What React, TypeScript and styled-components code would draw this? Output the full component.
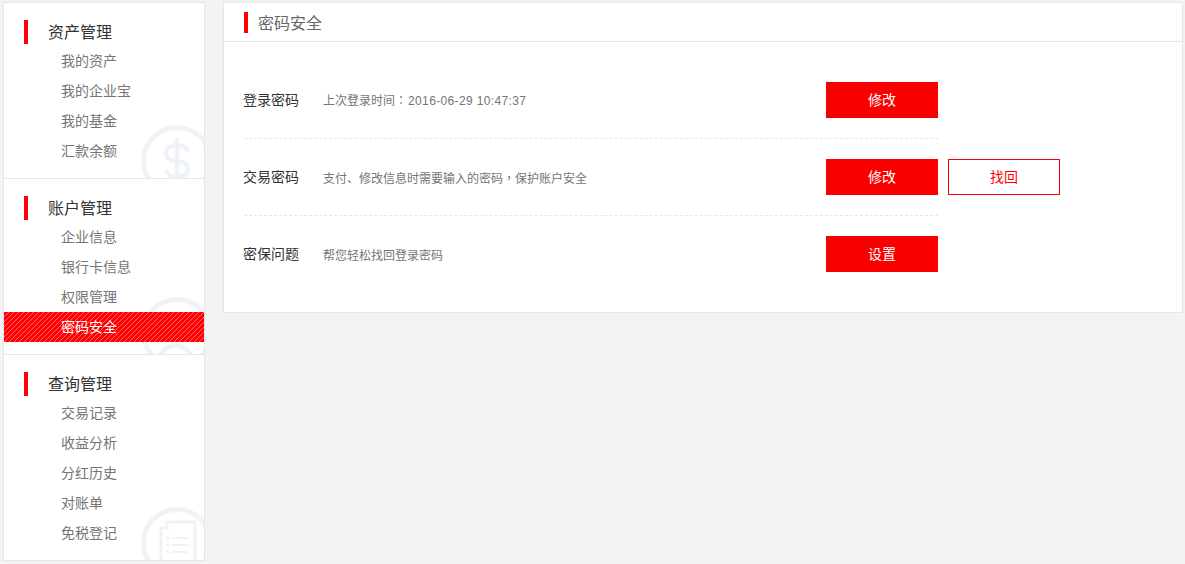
import React from "react";
import styled, { createGlobalStyle } from "styled-components";

const Global = createGlobalStyle`
  html, body { margin: 0; padding: 0; background: #f3f3f3; height: 100%; overflow: hidden; }
  body { font-family: "Liberation Sans", "Noto Sans CJK SC", sans-serif; }
  * { box-sizing: border-box; }
`;

const Page = styled.div`
  display: flex;
  align-items: flex-start;
  gap: 18px;
  width: 1185px;
  padding: 2px 2px 0 3px;
`;

const Sidebar = styled.nav`
  width: 202px;
  height: 559px;
  background: #fff;
  border: 1px solid #e6e6e6;
  overflow: hidden;
`;

const Section = styled.section`
  position: relative;
  height: ${(p) => p.$h}px;
  padding-top: 17px;
  overflow: hidden;
  & + & { border-top: 1px solid #e6e8ea; }
`;

const SectionTitle = styled.h3`
  margin: 0 0 2px;
  height: 24px;
  display: flex;
  align-items: center;
  gap: 20px;
  padding: 0 0 2px 20px;
  font-size: 16px;
  font-weight: 400;
  color: #333;
  &::before {
    content: "";
    width: 4px;
    height: 24px;
    margin-bottom: -2px;
    background: #f00;
  }
`;

const MenuList = styled.ul`
  list-style: none;
  margin: 0;
  padding: 0;
  position: relative;
  z-index: 1;
`;

const MenuItem = styled.li`
  height: 30px;
  line-height: 30px;
  padding-left: 57px;
  font-size: 14px;
  color: ${(p) => (p.$active ? "#fff" : "#757575")};
  background: ${(p) =>
    p.$active
      ? "repeating-linear-gradient(135deg, #f00 0, #f00 2.83px, #ff6a6a 2.83px, #ff6a6a 3.54px)"
      : "transparent"};
`;

const Watermark = styled.svg`
  position: absolute;
  left: 137px;
  top: ${(p) => p.$top}px;
  width: 72px;
  height: 72px;
  fill: none;
  stroke: #eff3f7;
`;

const Main = styled.main`
  width: 960px;
  height: 311px;
  background: #fff;
  border: 1px solid #e6e6e6;
`;

const MainHeader = styled.header`
  height: 39px;
  display: flex;
  align-items: center;
  gap: 10px;
  padding: 0 0 1px 20px;
  border-bottom: 1px solid #e6e6e6;
  font-size: 16px;
  color: #666;
  &::before {
    content: "";
    width: 4px;
    height: 21px;
    margin-top: 2px;
    background: #f00;
  }
`;

const Rows = styled.div`
  width: 694px;
  margin: 19px 0 0 20px;
`;

const Row = styled.div`
  height: 77px;
  display: flex;
  align-items: center;
  & + & { border-top: 1px dashed #e6e6e6; }
`;

const RowLabel = styled.span`
  width: 80px;
  flex: none;
  margin-left: -1px;
  padding-bottom: 2px;
  font-size: 14px;
  color: #333;
`;

const RowNote = styled.span`
  width: 503px;
  flex: none;
  font-size: 12px;
  color: #757575;
`;

const Punct = styled.span`
  font-family: "Noto Sans CJK TC", sans-serif;
`;

const Stamp = styled.span`
  margin-left: 1px;
  letter-spacing: 0.36px;
`;

const Actions = styled.div`
  display: flex;
  gap: 10px;
  width: 234px;
  flex: none;
`;

const Button = styled.button`
  width: 112px;
  height: 36px;
  padding: 0 0 2px;
  flex: none;
  border: 1px solid;
  border-radius: 0;
  background: ${(p) => (p.$outline ? "#fff" : "#f90000")};
  border-color: ${(p) => (p.$outline ? "#f00" : "#f90000")};
  color: ${(p) => (p.$outline ? "#f00" : "#fff")};
  font: 14px "Liberation Sans", "Noto Sans CJK SC", sans-serif;
`;

const Circle = () => <circle cx="36" cy="36" r="33.5" strokeWidth="5" />;

const menu = [
  { title: "资产管理", h: 175, items: ["我的资产", "我的企业宝", "我的基金", "汇款余额"] },
  { title: "账户管理", h: 176, items: ["企业信息", "银行卡信息", "权限管理", "密码安全"] },
  { title: "查询管理", h: 206, items: ["交易记录", "收益分析", "分红历史", "对账单", "免税登记"] },
];

const marks = [
  <Watermark key="a" $top={122} viewBox="0 0 72 72">
    <Circle />
    <path d="M47 27c-1-5-5-7-11-7s-11 3-11 8c0 5 5 8 11 8s11 3 11 8-5 8-11 8-10-3-11-7M36 13v46" strokeWidth="4.5" />
  </Watermark>,
  <Watermark key="b" $top={118} viewBox="0 0 72 72">
    <Circle />
    <path d="M19 62C21 44 48 44 51 62" strokeWidth="5" />
  </Watermark>,
  <Watermark key="c" $top={152} viewBox="0 0 72 72">
    <Circle />
    <path d="M20 72V21h6v-6h28v57" strokeWidth="3" />
    <path d="M31 31h16M31 38h16M31 45h16" strokeWidth="2" />
    <path d="M25 31h3M25 38h3M25 45h3" strokeWidth="3" />
  </Watermark>,
];

const rows = [
  {
    label: "登录密码",
    note: <>上次登录时间<Punct>：</Punct><Stamp>2016-06-29 10:47:37</Stamp></>,
    main: "修改",
  },
  {
    label: "交易密码",
    note: <>支付、修改信息时需要输入的密码<Punct>，</Punct>保护账户安全</>,
    main: "修改",
    extra: "找回",
  },
  { label: "密保问题", note: <>帮您轻松找回登录密码</>, main: "设置" },
];

export default function App() {
  return (
    <>
      <Global />
      <Page>
        <Sidebar>
          {menu.map((s, i) => (
            <Section key={s.title} $h={s.h}>
              {marks[i]}
              <SectionTitle>{s.title}</SectionTitle>
              <MenuList>
                {s.items.map((it) => (
                  <MenuItem key={it} $active={it === "密码安全"}>{it}</MenuItem>
                ))}
              </MenuList>
            </Section>
          ))}
        </Sidebar>
        <Main>
          <MainHeader>密码安全</MainHeader>
          <Rows>
            {rows.map((r) => (
              <Row key={r.label}>
                <RowLabel>{r.label}</RowLabel>
                <RowNote>{r.note}</RowNote>
                <Actions>
                  <Button>{r.main}</Button>
                  {r.extra && <Button $outline>{r.extra}</Button>}
                </Actions>
              </Row>
            ))}
          </Rows>
        </Main>
      </Page>
    </>
  );
}
